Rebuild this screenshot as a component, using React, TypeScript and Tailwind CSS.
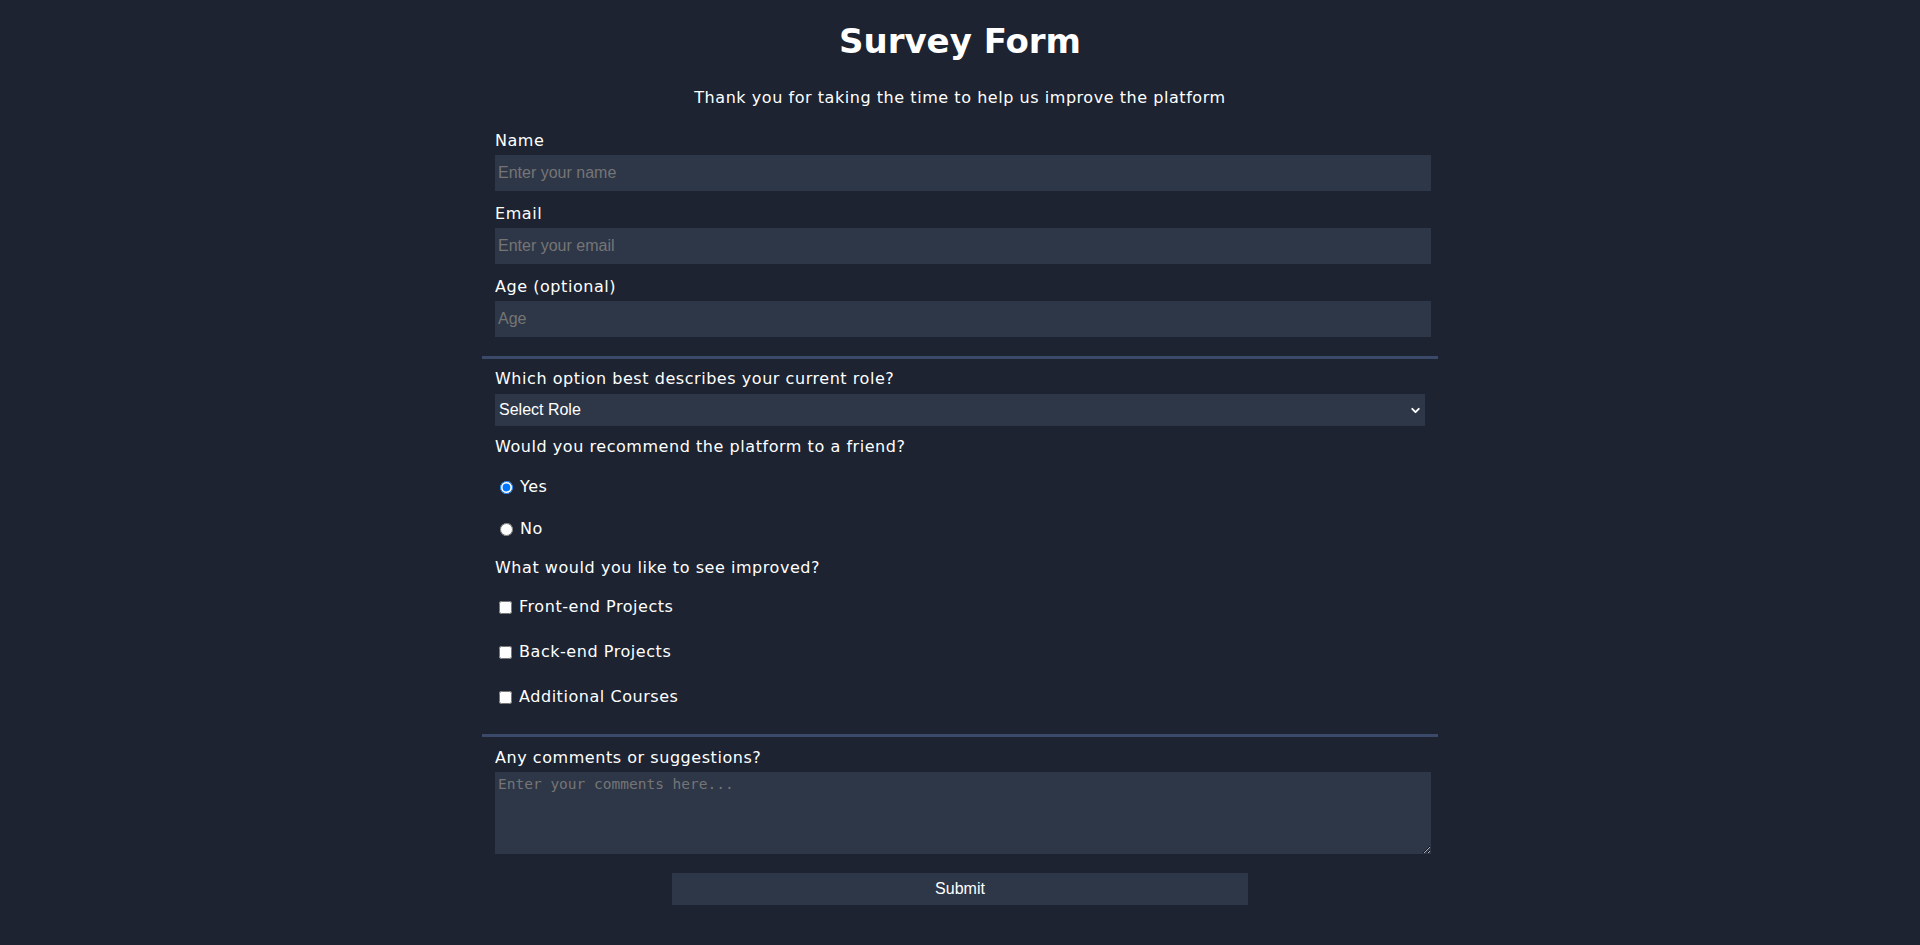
import { ChevronDown } from "lucide-react";

export default function App() {
    const improvements = ["Front-end Projects", "Back-end Projects", "Additional Courses"];

    return (
        <div className="min-h-screen w-full bg-[#1d2331] text-white font-['DejaVu_Sans',Verdana,sans-serif] tracking-[0.55px]">
            <form className="w-[956px] mx-auto pb-10" onSubmit={(e) => e.preventDefault()}>
                <h1 className="pt-[21px] text-center text-[34px] leading-[40px] font-bold tracking-normal">
                    Survey Form
                </h1>
                <p className="mt-[27px] text-center text-base leading-[20px]">
                    Thank you for taking the time to help us improve the platform
                </p>

                <div className="px-[13px]">
                    <label className="block mt-[23px] leading-[20px]">Name</label>
                    <input
                        type="text"
                        placeholder="Enter your name"
                        className="mt-[4px] block w-[936px] h-[36px] pl-[3px] bg-[#2e3748] text-white text-base tracking-normal font-['Liberation_Sans',Arial,sans-serif] placeholder:text-[#757575] outline-none"
                    />

                    <label className="block mt-[13px] leading-[20px]">Email</label>
                    <input
                        type="email"
                        placeholder="Enter your email"
                        className="mt-[4px] block w-[936px] h-[36px] pl-[3px] bg-[#2e3748] text-white text-base tracking-normal font-['Liberation_Sans',Arial,sans-serif] placeholder:text-[#757575] outline-none"
                    />

                    <label className="block mt-[13px] leading-[20px]">Age (optional)</label>
                    <input
                        type="number"
                        placeholder="Age"
                        className="mt-[4px] block w-[936px] h-[36px] pl-[3px] bg-[#2e3748] text-white text-base tracking-normal font-['Liberation_Sans',Arial,sans-serif] placeholder:text-[#757575] outline-none"
                    />
                </div>

                <div className="mt-[19px] h-[3px] w-full bg-[#3b4a6b]" />

                <div className="px-[13px]">
                    <label className="block mt-[10px] leading-[20px]">
                        Which option best describes your current role?
                    </label>
                    <div className="relative mt-[5px] w-[930px]">
                        <select
                            defaultValue=""
                            className="block w-full h-[32px] pl-[4px] appearance-none bg-[#2e3748] text-white text-base tracking-normal font-['Liberation_Sans',Arial,sans-serif] outline-none"
                        >
                            <option value="" disabled>
                                Select Role
                            </option>
                            <option>Student</option>
                            <option>Full Time Job</option>
                            <option>Full Time Learner</option>
                            <option>Prefer not to say</option>
                            <option>Other</option>
                        </select>
                        <ChevronDown
                            size={13}
                            strokeWidth={3.5}
                            className="absolute right-[3px] top-[10px] pointer-events-none text-white"
                        />
                    </div>

                    <p className="mt-[11px] leading-[20px]">Would you recommend the platform to a friend?</p>
                    <label className="mt-[20px] flex items-center h-[20px] leading-[20px]">
                        <input type="radio" name="recommend" defaultChecked className="ml-[5px] mr-[7px] w-[13px] h-[13px]" />
                        Yes
                    </label>
                    <label className="mt-[22px] flex items-center h-[20px] leading-[20px]">
                        <input type="radio" name="recommend" className="ml-[5px] mr-[7px] w-[13px] h-[13px]" />
                        No
                    </label>

                    <p className="mt-[19px] leading-[20px]">What would you like to see improved?</p>
                    <div className="mt-[19px] flex flex-col gap-[25px]">
                        {improvements.map((item) => (
                            <label key={item} className="flex items-center h-[20px] leading-[20px]">
                                <input type="checkbox" className="ml-[4px] mr-[7px] w-[13px] h-[13px]" />
                                {item}
                            </label>
                        ))}
                    </div>
                </div>

                <div className="mt-[27px] h-[3px] w-full bg-[#3b4a6b]" />

                <div className="px-[13px]">
                    <label className="block mt-[11px] leading-[20px]">Any comments or suggestions?</label>
                    <textarea
                        placeholder="Enter your comments here..."
                        className="mt-[4px] block w-[936px] h-[82px] px-[3px] py-[2px] bg-[#2e3748] text-white text-[14.5px] tracking-normal font-['DejaVu_Sans_Mono',monospace] placeholder:text-[#757575] outline-none"
                    />
                </div>

                <button
                    type="submit"
                    className="mt-[19px] mx-auto block w-[576px] h-[32px] bg-[#2e3748] text-white text-base tracking-normal font-['Liberation_Sans',Arial,sans-serif]"
                >
                    Submit
                </button>
            </form>
        </div>
    );
}
